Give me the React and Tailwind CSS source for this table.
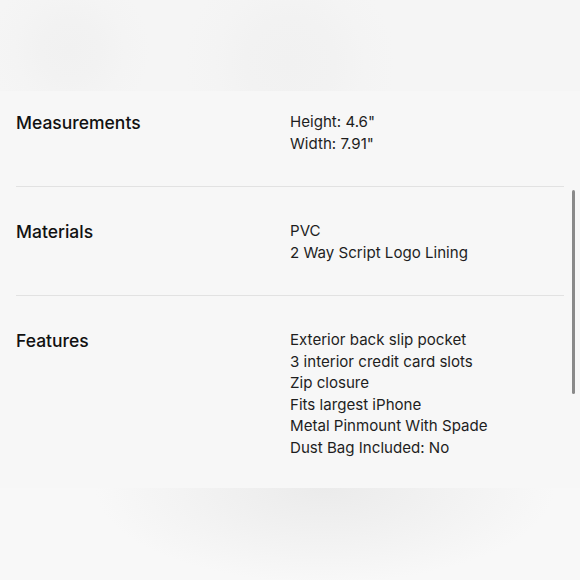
import React from "react";

const ROWS = [
  { label: "Measurements", values: ['Height: 4.6"', 'Width: 7.91"'] },
  { label: "Materials", values: ["PVC", "2 Way Script Logo Lining"] },
  {
    label: "Features",
    values: [
      "Exterior back slip pocket",
      "3 interior credit card slots",
      "Zip closure",
      "Fits largest iPhone",
      "Metal Pinmount With Spade",
      "Dust Bag Included: No",
    ],
  },
];

export default function App() {
  return (
    <div
      className="relative w-[580px] h-[580px] overflow-hidden bg-[#f8f8f8] text-[#161616]"
      style={{ fontFamily: "Inter, 'Liberation Sans', sans-serif" }}
    >
      {/* blurred image strip */}
      <div className="h-[91px] bg-[#f5f5f5] bg-[radial-gradient(circle_at_70px_50px,#f1f1f1_0px,#f2f2f2_30px,#f4f4f4_55px,transparent_80px),radial-gradient(circle_at_290px_62px,#f1f1f1_0px,#f2f2f2_45px,#f4f4f4_75px,transparent_105px)]" />

      {/* spec list */}
      <div className="bg-[#f7f7f7] px-4 h-[397px]">
        {ROWS.map((row, i) => (
          <div
            key={row.label}
            className={
              "flex " +
              (i === 0 ? "pt-[20px] h-[96px] " : "pt-[33px] ") +
              (i === 1 ? "h-[109px] " : "") +
              (i < ROWS.length - 1 ? "border-b border-[#e2e2e2]" : "")
            }
          >
            <div className="w-[274px] text-[17.5px] font-medium leading-[22px] pt-[1px] text-[#111]">{row.label}</div>
            <div className="flex flex-col text-[15.1px] leading-[21.5px] text-[#1e1e1e]">
              {row.values.map((v) => (
                <span key={v}>{v}</span>
              ))}
            </div>
          </div>
        ))}
      </div>

      {/* shadow below */}
      <div className="h-[92px] bg-[radial-gradient(ellipse_230px_95px_at_325px_0px,#ebebeb_0%,#f0f0f0_40%,#f8f8f8_100%)]" />

      {/* scrollbar */}
      <div className="absolute left-[572px] top-[190px] w-[3px] h-[204px] rounded-full bg-[#8a8a8a]" />
    </div>
  );
}
